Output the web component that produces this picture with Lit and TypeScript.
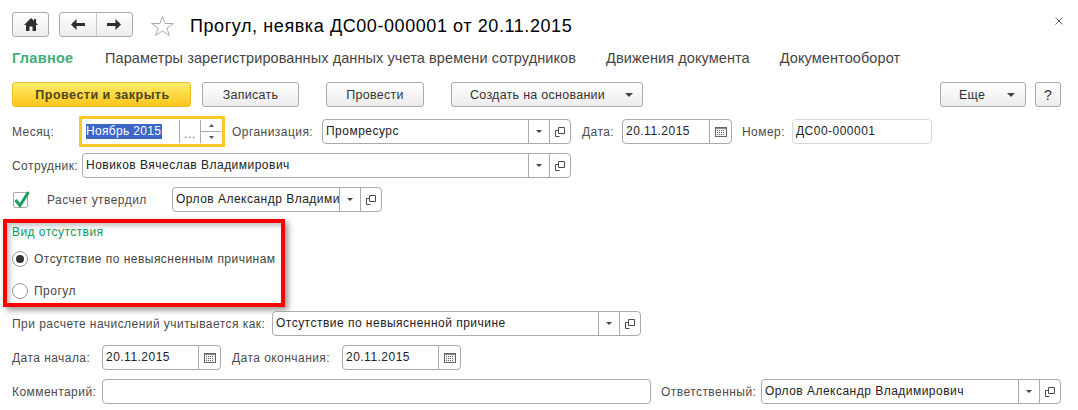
import { LitElement, html, css } from "lit";
import { customElement } from "lit/decorators.js";

const arrowBtn = html`<svg class="ico" width="8" height="4" viewBox="0 0 8 4"><path d="M0 0h8L4 4z" fill="#444"/></svg>`;
const arrowDown = html`<svg class="ico" width="6" height="3" viewBox="0 0 6 3"><path d="M0 0h6L3 3z" fill="#444"/></svg>`;
const copyIcon = html`<svg class="ico" width="10" height="10" viewBox="0 0 10 10" fill="none" stroke="#4a4a4a"><path d="M3.500.5h6v6h-6z"/><path d="M3.500 3.500h-3v6h4"/></svg>`;
const calIcon = html`<svg class="ico" width="12" height="10" viewBox="0 0 12 10"><rect x=".5" y=".5" width="11" height="9" fill="#f4f4f4" stroke="#666"/><path d="M1 1.500h10" stroke="#888"/><path d="M2 3.500h8M2 5.500h8M2 7.500h8" stroke="#666" stroke-dasharray="1 1"/></svg>`;

interface F { w: number; text?: string; drop?: boolean; copy?: boolean; cal?: boolean; muted?: boolean }

function field(f: F) {
  return html`<div class="field ${f.muted ? "muted" : ""}" style="width:${f.w}px">
    <span class="val">${f.text ?? ""}</span>
    ${f.drop ? html`<span class="cell">${arrowDown}</span>` : ""}
    ${f.copy ? html`<span class="cell">${copyIcon}</span>` : ""}
    ${f.cal ? html`<span class="cell cal">${calIcon}</span>` : ""}
  </div>`;
}

@customElement("app-root")
export class AppRoot extends LitElement {
  static styles = css`
    :host { display: block; width: 1078px; height: 410px; background: #fff; overflow: hidden;
      font-family: "Liberation Sans", Arial, sans-serif; font-size: 12px; color: #4b4b4b; }
    * { box-sizing: border-box; }
    .page { display: flex; flex-direction: column; padding: 12px 17px 0 12px; }
    .row { display: flex; align-items: center; height: 25px; }
    .mt9 { margin-top: 9px; }
    .btn { height: 25px; border: 1px solid #aaa; border-radius: 3px; background: linear-gradient(#fff, #ececec);
      display: flex; align-items: center; justify-content: center; color: #333; letter-spacing: .27px; font-size: 12.5px; }
    .head { justify-content: flex-start; }
    .nav { display: flex; width: 74px; height: 25px; border: 1px solid #aaa; border-radius: 3px; margin-left: 10px;
      background: linear-gradient(#fff, #ececec); }
    .nav > span { flex: 1; display: flex; align-items: center; justify-content: center; }
    .nav > span + span { border-left: 1px solid #c8c8c8; }
    .home { width: 37px; }
    .star { margin: 3px 0 0 18px; }
    .title { margin: 4px 0 0 16px; font-size: 18px; color: #000; letter-spacing: .58px; white-space: nowrap; }
    .close { margin: -7px -2px 0 auto; }
    .tabs { display: flex; align-items: center; height: 20px; margin-top: 11px; font-size: 14.5px; color: #444; white-space: nowrap; }
    .tab-main { color: #3fae78; font-weight: 700; width: 93px; letter-spacing: .3px; }
    .tab { letter-spacing: .09px; }
    .tabs .tab + .tab { margin-left: 30px; }
    .cmd { margin-top: 14px; }
    .primary { background: linear-gradient(#ffec6a, #fcc61c); border-color: #ebbd2c; font-weight: 700; color: #4b4520; width: 179px; letter-spacing: .5px; padding-left: 2px; }
    .drop { justify-content: space-between; }
    .lbl { white-space: nowrap; letter-spacing: .45px; font-size: 12px; }
    .field { height: 25px; display: flex; align-items: stretch; border: 1px solid #aaa; border-radius: 4px; background: #fff; flex: none; }
    .field.muted { border-color: #d8d8d8; }
    .val { flex: 1; min-width: 0; padding-left: 3px; overflow: hidden; white-space: nowrap; color: #222;
      letter-spacing: .48px; line-height: 23px; }
    .cell { width: 21px; flex: none; border-left: 1px solid #aaa; display: flex; align-items: center; justify-content: center; }
    .cal { width: 22px; }
    .mid { margin-top: 12px; height: 25px; }
    .month { width: 146px; height: 31px; margin: -3px 0; border: 3px solid #fbc926; flex: none; display: flex; align-items: center; padding-left: 4px; }
    .sel { background: #3d66c6; color: #fff; width: 76px; line-height: 15px; letter-spacing: .33px; white-space: nowrap; }
    .dots { margin-left: 17px; width: 21px; height: 23px; border-left: 1px solid #aaa; display: flex; align-items: flex-end; justify-content: center; line-height: 17px; color: #666; letter-spacing: .6px; }
    .spin { width: 21px; height: 23px; border-left: 1px solid #aaa; display: flex; flex-direction: column; align-items: center; justify-content: center; gap: 4px; }
    .spin i { display: block; width: 100%; height: 1px; background: #aaa; }
    .check { width: 15px; height: 16px; border: 1px solid #aaa; border-radius: 2px; margin-left: 1px; position: relative; flex: none; background: #fff; }
    .check svg { position: absolute; left: -1px; top: -2px; }
    .group { margin: 7px 0 4px -9px; width: 282px; height: 88px; border: 4px solid #f00;
      box-shadow: 3px 3px 6px rgba(60,60,60,.55), inset 3px 3px 5px rgba(60,60,60,.3);
      padding: 2px 0 0 5px; display: flex; flex-direction: column; }
    .gt { color: #0f9a5c; letter-spacing: .45px; height: 15px; line-height: 15px; }
    .radio { display: flex; align-items: center; height: 16px; gap: 6px; letter-spacing: .47px; white-space: nowrap; color: #444; }
    .radio.a { margin-top: 11px; }
    .radio.b { margin-top: 16px; }
    .dot { width: 16px; height: 16px; border-radius: 50%; border: 1px solid #999; background: #fff; display: flex; align-items: center; justify-content: center; flex: none; }
    .dot b { width: 8px; height: 8px; border-radius: 50%; background: #333; }
    .ico { display: block; }
    .help { width: 26px; margin-left: 9px; font-size: 14px; }
    .push { margin-left: auto; }
  `;

  label(text: string, w: number) {
    return html`<span class="lbl" style="width:${w}px">${text}</span>`;
  }

  render() {
    return html`<div class="page">
      <div class="row head">
        <div class="btn home"><svg width="14" height="13" viewBox="0 0 14 13"><path d="M7 0l3 2.800V1h2v3.700L14 7h-2v6H8.500V8.500h-3V13H2V7H0z" fill="#2e2e2e"/></svg></div>
        <div class="nav">
          <span><svg width="14" height="11" viewBox="0 0 14 11"><path d="M0 5.500L5.500 0v4H14v3H5.500v4z" fill="#2e2e2e"/></svg></span>
          <span><svg width="14" height="11" viewBox="0 0 14 11"><path d="M14 5.500L8.500 0v4H0v3h8.500v4z" fill="#2e2e2e"/></svg></span>
        </div>
        <svg class="star" width="23" height="20" viewBox="0 0 23 20"><path d="M11.500.5l2.700 7h8.300l-6.600 4.700 2.600 7.300-7-4.500-7 4.500 2.600-7.300L.5 7.500h8.300z" fill="none" stroke="#aaa"/></svg>
        <span class="title">Прогул, неявка ДС00-000001 от 20.11.2015</span>
        <svg class="close" width="8" height="8" viewBox="0 0 8 8"><path d="M.5.500l7 7M7.500.500l-7 7" stroke="#666" fill="none"/></svg>
      </div>
      <div class="tabs">
        <span class="tab-main">Главное</span>
        <span class="tab">Параметры зарегистрированных данных учета времени сотрудников</span>
        <span class="tab">Движения документа</span>
        <span class="tab">Документооборот</span>
      </div>
      <div class="row cmd">
        <div class="btn primary">Провести и закрыть</div>
        <div class="btn" style="width:97px;margin-left:11px">Записать</div>
        <div class="btn" style="width:98px;margin-left:27px">Провести</div>
        <div class="btn drop" style="width:192px;margin-left:27px;padding:0 9px 0 18px">Создать на основании ${arrowBtn}</div>
        <div class="btn drop push" style="width:86px;padding:0 10px 0 18px">Еще ${arrowBtn}</div>
        <div class="btn help">?</div>
      </div>
      <div class="row mid">
        ${this.label("Месяц:", 67)}
        <div class="month">
          <span class="sel">Ноябрь 2015</span>
          <span class="dots">...</span>
          <span class="spin">
            <svg class="ico" width="5" height="3" viewBox="0 0 5 3"><path d="M2.500 0L5 3H0z" fill="#555"/></svg>
            <i></i>
            <svg class="ico" width="5" height="3" viewBox="0 0 5 3"><path d="M0 0h5L2.500 3z" fill="#555"/></svg>
          </span>
        </div>
        <span class="lbl" style="width:90px;margin-left:7px">Организация:</span>
        ${field({ w: 249, text: "Промресурс", drop: true, copy: true })}
        <span class="lbl" style="width:40px;margin-left:11px">Дата:</span>
        ${field({ w: 110, text: "20.11.2015", cal: true })}
        <span class="lbl" style="width:50px;margin-left:10px">Номер:</span>
        ${field({ w: 140, text: "ДС00-000001", muted: true })}
      </div>
      <div class="row mt9">
        ${this.label("Сотрудник:", 70)}
        ${field({ w: 489, text: "Новиков Вячеслав Владимирович", drop: true, copy: true })}
      </div>
      <div class="row mt9">
        <span class="check"><svg width="17" height="17" viewBox="0 0 17 17"><path d="M2.500 9l4.500 5.500L15.500 1" fill="none" stroke="#16a05a" stroke-width="3"/></svg></span>
        <span class="lbl" style="width:125px;margin-left:19px">Расчет утвердил</span>
        ${field({ w: 210, text: "Орлов Александр Владимирович", drop: true, copy: true })}
      </div>
      <div class="group">
        <div class="gt">Вид отсутствия</div>
        <label class="radio a"><span class="dot"><b></b></span>Отсутствие по невыясненным причинам</label>
        <label class="radio b"><span class="dot"></span>Прогул</label>
      </div>
      <div class="row">
        ${this.label("При расчете начислений учитывается как:", 260)}
        ${field({ w: 369, text: "Отсутствие по невыясненной причине", drop: true, copy: true })}
      </div>
      <div class="row mt9">
        ${this.label("Дата начала:", 90)}
        ${field({ w: 119, text: "20.11.2015", cal: true })}
        <span class="lbl" style="width:110px;margin-left:11px">Дата окончания:</span>
        ${field({ w: 119, text: "20.11.2015", cal: true })}
      </div>
      <div class="row mt9">
        ${this.label("Комментарий:", 90)}
        ${field({ w: 549 })}
        <span class="lbl" style="width:100px;margin-left:10px">Ответственный:</span>
        ${field({ w: 300, text: "Орлов Александр Владимирович", drop: true, copy: true })}
      </div>
    </div>`;
  }
}
